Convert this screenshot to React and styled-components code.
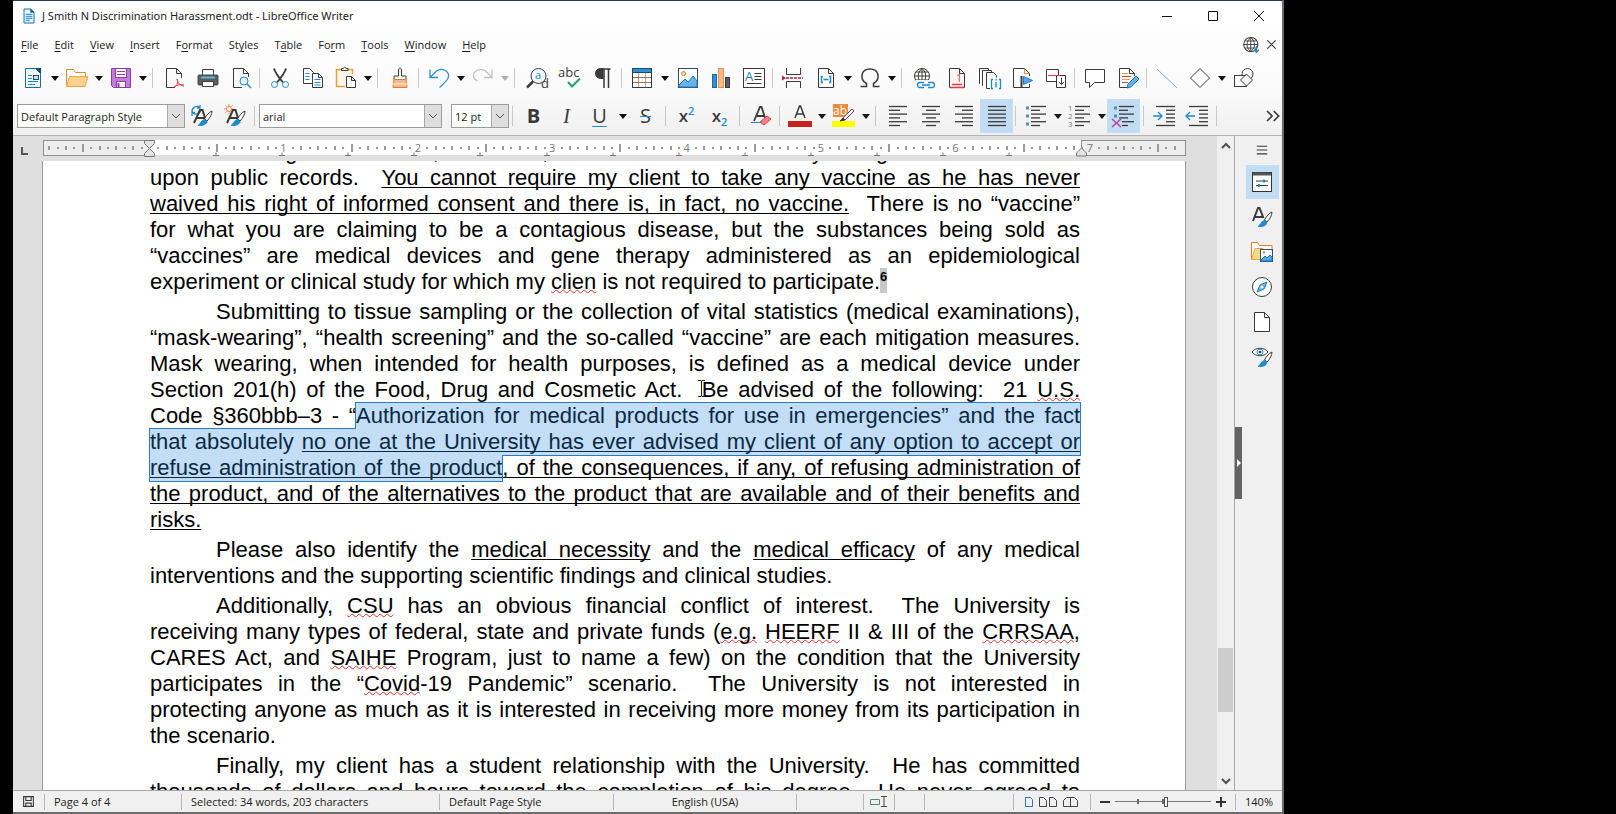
import React, { useState } from "react";
import styled, { createGlobalStyle } from "styled-components";

const INK = "#3a3a38";
const BLUE = "#1e8bcd";

const MENUS = [
  ["", "F", "ile"],
  ["", "E", "dit"],
  ["", "V", "iew"],
  ["", "I", "nsert"],
  ["F", "o", "rmat"],
  ["St", "y", "les"],
  ["T", "a", "ble"],
  ["Fo", "r", "m"],
  ["", "T", "ools"],
  ["", "W", "indow"],
  ["", "H", "elp"],
];

const brush = (
  <>
    <path d="M22 7c-3 1-6 5-7.500 8l2.500 2c3-3 5-7 5-10z" fill="#fff" stroke={INK} />
    <path d="M14.500 15.500l2.500 2c-1 4-5 4-9 4 3-1.500 3-5.500 6.500-6z" fill={BLUE} stroke={BLUE} />
  </>
);
const rows = (xs) =>
  xs.map(([a, b], i) => <path key={i} d={`M${a} ${2.5 + i * 3.8}H${b}`} strokeWidth="1.300" />);

// every drawing sits in a 24 x 24 box
const ICONS = {
  doc: (
    <>
      <path d="M4.500 1.500h10l5 5v16h-15z" fill="#e8f3fb" stroke="#1a6ea8" strokeWidth="1.500" />
      <path d="M14.500 1.500v5h5z" fill="#1a5a8c" stroke="#1a5a8c" />
      <path d="M7 9.500h10M7 12.500h10M7 15.500h10M7 18.500h6" stroke={BLUE} strokeWidth="1.500" />
    </>
  ),
  newDoc: (
    <>
      <path d="M4.500 2.500h10l5 5v14h-15z" fill="#eff7fd" stroke="#1a6ea8" />
      <path d="M14 2l6 6V2z" fill="#1b4a70" stroke="none" />
      <path d="M7 9.500h4M7 12.500h4M7 15.500h10M7 18.500h7" stroke={BLUE} />
      <rect x="12.500" y="9.500" width="5" height="4" fill="#cfe6f7" stroke="#1b4a70" />
    </>
  ),
  open: (
    <>
      <path d="M1.500 20.500v-17h7l2 3h10v4" fill="#fff" stroke="#e08a2e" />
      <path d="M1.500 20.500l3-10h18.500l-3 10z" fill="#fcd28e" stroke="#f0a545" />
    </>
  ),
  save: (
    <>
      <path d="M2.500 2.500h19v19h-17l-2-2z" fill="#c57bd8" stroke="#8e3ba8" />
      <rect x="6.500" y="2.500" width="11" height="9" fill="#fff" stroke="#8e3ba8" />
      <path d="M8 5.500h8M8 8.500h8" stroke="#8e3ba8" />
      <rect x="7.500" y="15.500" width="9" height="6" fill="#fff" stroke="#8e3ba8" />
      <path d="M9.500 17v4" stroke="#8e3ba8" strokeWidth="2" />
    </>
  ),
  pdf: (
    <>
      <path d="M12 21.500H3.500v-19h10l5 5V12" fill="#fafafa" />
      <path d="M13.500 2.500v5h5" fill="none" />
      <path d="M14 13c1 5 4 7 7 7M14 13c2 4-1 7-3 9M11 21c3-2 6-3 10-2" fill="none" stroke="#dd3a4c" />
    </>
  ),
  print: (
    <>
      <path d="M6.500 9V3.500h11V9" fill="#fff" />
      <rect x="2" y="9" width="20" height="10" rx="1" fill="#5c5c5a" stroke="#4a4a48" />
      <path d="M5 11.500h14" stroke="#57b6e8" strokeWidth="2" />
      <path d="M6.500 15.500h11v5h-11z" fill="#fff" />
    </>
  ),
  preview: (
    <>
      <path d="M13 21.500H4.500v-19h10l5 5V11" fill="#fafafa" />
      <path d="M14.500 2.500v5h5" fill="none" />
      <circle cx="15" cy="15" r="4" fill="#e6f2fa" stroke={BLUE} />
      <path d="M18 18l4 4" stroke={BLUE} strokeWidth="1.500" />
    </>
  ),
  cut: (
    <>
      <path d="M6 2.500c1 4 4 8 9 14M18 2.500c-1 4-4 8-9 14" fill="none" strokeWidth="1.800" />
      <circle cx="6.500" cy="18.500" r="3" fill="#fff" stroke={BLUE} />
      <circle cx="17.500" cy="18.500" r="3" fill="#fff" stroke={BLUE} />
    </>
  ),
  copy: (
    <>
      <path d="M2.500 2.500h6l4 4v11h-10z" fill="#fff" />
      <path d="M4.500 7.500h4M4.500 10.500h4M4.500 13.500h4" stroke={BLUE} />
      <path d="M11.500 7.500h6l4 4v10h-10z" fill="#fff" />
      <path d="M17.500 7.500v4h4" fill="none" />
      <path d="M13.500 13.500h6M13.500 16.500h6M13.500 19h6" stroke={BLUE} />
    </>
  ),
  paste: (
    <>
      <path d="M11 20.500H2.500v-17h16V8" fill="#fff7e8" stroke="#e8a03c" strokeWidth="1.500" />
      <path d="M7.500 4.500v-2h2c0-1.500 2.500-1.500 2.500 0h2v2z" fill="#fff" />
      <path d="M12.500 10.500h5l4 4v7h-9z" fill="#fff" />
      <path d="M17.500 10.500v4h4" fill="none" />
    </>
  ),
  clone: (
    <>
      <path d="M10.500 10V4c0-2.500 3-2.500 3 0v6h4.500v3.500H6V10z" fill="#fff" />
      <path d="M6 13.500h12l1 8H5z" fill="#f9b98c" stroke="#e8772e" />
      <path d="M5 18h14" stroke="#fff" />
    </>
  ),
  undo: <path d="M3 3.500v8h8M3.500 11l6-6c5-4 13 0 12 6-.5 3-4 6-9 10.500" fill="none" stroke="#2f8fd0" strokeWidth="1.300" />,
  redo: <path d="M21 3.500v8h-8M20.500 11l-6-6C9.500 1 1.500 5 2.500 11c.5 2 2 3 4 4" fill="none" stroke="#c4c4c4" strokeWidth="1.300" />,
  find: (
    <>
      <circle cx="13.500" cy="10" r="7.500" fill="#f4f9fd" />
      <path d="M8 15.500L2 21.500" strokeWidth="2.500" />
      <text x="10" y="13" fontSize="11" fill={BLUE}>a</text>
      <text x="16" y="22" fontSize="13" fill={INK}>d</text>
    </>
  ),
  spell: (
    <>
      <text x="0" y="11" fontSize="13" fill={INK}>abc</text>
      <path d="M10 16l4 4.500 8-8" fill="none" stroke="#27a06b" strokeWidth="2" />
    </>
  ),
  pilcrow: (
    <>
      <path d="M12 2.500H9.500a5 5 0 000 10H12z" fill={INK} />
      <path d="M13 22V3h4.500V22M12 3h7.500" fill="none" strokeWidth="1.500" />
    </>
  ),
  table: (
    <>
      <rect x="2.500" y="2.500" width="19" height="19" fill="#fff" />
      <path d="M8.500 6v15M15.500 6v15" stroke="#e0965a" />
      <path d="M3 11.500h18M3 16.500h18" stroke="#8a7464" />
      <rect x="2.500" y="2.500" width="19" height="19" fill="none" stroke="#2b3d50" />
      <rect x="2.500" y="2.500" width="19" height="4" fill="#2f8fd0" stroke="#1b4a70" />
    </>
  ),
  image: (
    <>
      <rect x="2.500" y="2.500" width="19" height="19" fill="#fff" stroke="#31516b" />
      <path d="M3 19l6-6 3 3 5-6 4 5v6H3z" fill="#68b4ea" stroke="#1e7ac0" />
      <circle cx="7.500" cy="7.500" r="2" fill="#fce0c0" stroke="#e8772e" />
    </>
  ),
  chart: (
    <>
      <rect x="3.500" y="8.500" width="4" height="13" fill="#2f8fd0" stroke="#1b6aa5" />
      <rect x="9.500" y="2.500" width="5" height="19" fill="#f9b98c" stroke="#e8904e" />
      <rect x="16.500" y="11.500" width="4" height="10" fill="#5c5c5a" />
    </>
  ),
  textbox: (
    <>
      <rect x="1.500" y="2.500" width="21" height="19" fill="#fff" />
      <text x="3" y="15" fontSize="13" fill="#1e7ac0">A</text>
      <path d="M12.500 7.500h7M12.500 10.500h7M12.500 13.500h7M5 17.500h14.500" />
    </>
  ),
  pageBreak: (
    <>
      <path d="M5.500 2v6.500h14V2M5.500 22v-6.500h14V22" fill="none" />
      <path d="M5 12h17" stroke="#b02045" strokeDasharray="3 1" strokeWidth="1.500" />
      <path d="M1 9.500l4 2.500-4 2.500z" fill="#b02045" stroke="none" />
    </>
  ),
  field: (
    <>
      <path d="M4.500 2.500h10l5 5v14h-15z" fill="#fff" />
      <path d="M14.500 2.500v5h5" fill="none" />
      <path d="M9 10.500H7.500v6H9M15 10.500h1.500v6H15M9.500 13.500h5" fill="none" stroke={BLUE} strokeWidth="1.500" />
    </>
  ),
  omega: <path d="M2.500 20.500h6v-3C1 13 3 3 12 3s11 10 3.500 14.500v3h6" fill="none" strokeWidth="1.500" />,
  link: (
    <>
      <circle cx="10" cy="10" r="7.500" fill="#fff" />
      <path d="M2.500 10h15M4 6h12M4 14h12M10 2.500v15M10 2.500c-5 4-5 11 0 15M10 2.500c5 4 5 11 0 15" fill="none" />
      <path d="M4 14h20v9H4z" fill="#fafafa" stroke="none" />
      <path d="M12 16.500H8a2.500 2.500 0 000 5h4M16 16.500h4a2.500 2.500 0 010 5h-4M10 19h8" fill="none" stroke={BLUE} strokeWidth="1.300" />
    </>
  ),
  footnote: (
    <>
      <path d="M4.500 2.500h10l5 5v14h-15z" fill="#fff5f5" />
      <path d="M14.500 2.500v5h5" fill="none" />
      <text x="11" y="16" fontSize="11" fill="#dd3a4c">1</text>
      <path d="M5 21.500h14M7 18.500h10" stroke="#dd3a4c" strokeWidth="1.500" />
    </>
  ),
  index: (
    <>
      <path d="M2 17.500h-.5v-15h9v2M5 19.500h-.5v-15h9v2" fill="none" />
      <path d="M12 22.500H8.500v-16h7l3 3v2" fill="#fff" />
      <path d="M15 13.500h-1.500v9H15M21 13.500h1.500v9H21M18 16v5.500M18 13v1.500" fill="none" stroke={BLUE} strokeWidth="1.300" />
    </>
  ),
  bookmark: (
    <>
      <path d="M18.500 10V7.500l-5-5h-11v19h16V18" fill="#fff" />
      <path d="M13.500 2.500v5h5" fill="none" stroke="#e08a2e" />
      <path d="M10.500 10v12" strokeWidth="2" />
      <path d="M12.500 10.500l9 4-9 4z" fill="#55a8e4" stroke="#1e7ac0" />
    </>
  ),
  crossRef: (
    <>
      <path d="M2.500 3.500h12v12h-12z" fill="#fff" />
      <path d="M12.500 9.500h9v12h-9z" fill="#fff" />
      <path d="M4 9.500h12" stroke="#dd3a4c" />
      <path d="M17.500 11.500v7M15 16l2.500 2.500L20 16" fill="none" />
    </>
  ),
  comment: <path d="M2.500 3.500h19v13h-10l-5 5v-5h-4z" fill="#fff" />,
  track: (
    <>
      <path d="M18.500 10V7.500l-5-5h-10v19h9" fill="#fff" />
      <path d="M13.500 2.500v5h5" fill="none" />
      <path d="M6 7.500h6M6 13.500h8" stroke="#e8a03c" />
      <path d="M6 10.500h9M6 16.500h6" stroke="#dd3a4c" />
      <path d="M11 22l1-4 8-8 3 3-8 8z" fill="#68b4ea" stroke="#1e7ac0" />
    </>
  ),
  line: <path d="M2 3l20 19" stroke="#6fb1d8" />,
  diamond: <path d="M12 2.500l9.500 9.500-9.500 9.500L2.500 12z" fill="#fff" />,
  shapes: (
    <>
      <circle cx="15.500" cy="8" r="5.500" fill="#fff" />
      <rect x="2.500" y="9.500" width="12" height="11" fill="#fff" />
      <path d="M14.500 8l6 6-6 6-6-6z" fill="#f4f4f4" />
    </>
  ),
  styleUpdate: (
    <>
      <path d="M2 8a5 5 0 018-4.500M11 6A5 5 0 013 9M10 1v3H7M2 12V8.500h3" fill="none" stroke={BLUE} strokeWidth="1.300" />
      <path d="M4 19l6-13h2.500l4 13M7 14h8" fill="none" strokeWidth="2" />
      {brush}
    </>
  ),
  styleNew: (
    <>
      <circle cx="6" cy="5" r="2.500" fill="#fff" stroke="#e8772e" />
      <path d="M6 0v1.500M6 8.500V10M1 5h1.500M9.500 5H11M2.500 1.500l1 1M9.500 1.500l-1 1M2.500 8.500l1-1" stroke="#e8772e" />
      <path d="M4 19l6-13h2.500l4 13M7 14h8" fill="none" strokeWidth="2" />
      {brush}
    </>
  ),
  clear: (
    <>
      <path d="M5 17l6-14h1.500l4 12M8 12h7" fill="none" strokeWidth="1.800" />
      <path d="M2 18.500h9" stroke={BLUE} />
      <path d="M11 18l7-6 4 3-7 6z" fill="#f0808c" stroke="#dd3a4c" />
    </>
  ),
  fontColor: (
    <>
      <path d="M7 14l4.500-12h1L17 14M8.500 10h7" fill="none" strokeWidth="1.500" />
      <rect x="0" y="17" width="24" height="6" fill="#c9211e" stroke="none" />
    </>
  ),
  highlight: (
    <>
      <rect x="1" y="0" width="15" height="13" fill="#ee8b3a" stroke="none" />
      <text x="1" y="11" fontSize="12" fill="#fff">ab</text>
      <rect x="0" y="17" width="23" height="6" fill="#ffff00" stroke="none" />
      <path d="M11 14l9-9 2 2-9 9z" fill="#fff" stroke="#6a3d7c" />
      <path d="M8 17l3-3 2 2z" fill={INK} />
    </>
  ),
  alignLeft: rows([[3, 21], [3, 14], [3, 21], [3, 14], [3, 21], [3, 14]]),
  alignCenter: rows([[3, 21], [7, 17], [3, 21], [7, 17], [3, 21], [7, 17]]),
  alignRight: rows([[3, 21], [10, 21], [3, 21], [10, 21], [3, 21], [10, 21]]),
  alignJustify: rows([[3, 21], [3, 21], [3, 21], [3, 21], [3, 21], [3, 21]]),
  bullets: (
    <>
      {rows([[7, 22], [7, 16], [7, 22], [7, 16], [7, 22], [7, 16]])}
      <path d="M2 4h3M2 12h3M2 20h3" stroke="#4d90a8" strokeWidth="3" />
    </>
  ),
  numbers: (
    <>
      {rows([[7, 22], [7, 16], [7, 22], [7, 16], [7, 22], [7, 16]])}
      <text x="0" y="7" fontSize="8" fill="#777">1</text>
      <text x="0" y="15" fontSize="8" fill="#777">2</text>
      <text x="0" y="23" fontSize="8" fill="#777">3</text>
    </>
  ),
  noList: (
    <>
      {rows([[7, 22], [7, 16], [7, 22], [7, 16], [10, 22], [10, 16]])}
      <path d="M2 4h3M2 12h3" stroke="#4d90a8" strokeWidth="3" />
      <path d="M0 15l9 8M9 15l-9 8" stroke="#b8419c" strokeWidth="1.500" />
    </>
  ),
  indent: (
    <>
      {rows([[3, 22], [13, 22], [13, 22], [13, 22], [13, 22], [3, 22]])}
      <path d="M0 12h9M5 8l4 4-4 4" fill="none" stroke={BLUE} strokeWidth="1.300" />
    </>
  ),
  outdent: (
    <>
      {rows([[3, 22], [13, 22], [13, 22], [13, 22], [13, 22], [3, 22]])}
      <path d="M0 12h9M4 8l-4 4 4 4" fill="none" stroke={BLUE} strokeWidth="1.300" />
    </>
  ),
  more: <path d="M6 6l6 6-6 6M14 6l6 6-6 6" fill="none" strokeWidth="2" />,
  globe: (
    <>
      <circle cx="11" cy="12" r="10" fill="#fff" strokeWidth="1.500" />
      <path d="M1 12h20M3 7h16M3 17h16M11 2v20M11 2C4 8 4 16 11 22M11 2c7 6 7 14 0 20" fill="none" strokeWidth="1.300" />
      <path d="M19 14v9M15.500 19.500L19 23l3.500-3.500" fill="none" stroke={BLUE} strokeWidth="2" />
    </>
  ),
  close: <path d="M3 3l18 18M21 3L3 21" strokeWidth="2.500" />,
  burger: <path d="M3 5.500h18M3 12h18M3 18.500h18" strokeWidth="2" />,
  properties: (
    <>
      <rect x="2.500" y="2.500" width="19" height="19" fill="#fff" stroke="#333" />
      <path d="M3 4h18" stroke="#555" strokeWidth="3" />
      <path d="M6 11h12M6 15.500h12" />
      <path d="M13 11h2M8 15.500h2" stroke={BLUE} strokeWidth="3" />
    </>
  ),
  styles: (
    <>
      <path d="M3 16L8 3h1.500l4 10M5 12h8" fill="none" strokeWidth="2" />
      {brush}
    </>
  ),
  gallery: (
    <>
      <path d="M1.500 19.500v-17h6l2 3h12.500v4" fill="#fff" stroke="#e8772e" />
      <path d="M1.500 19.500l3.500-11h8v11z" fill="#f5dc8a" stroke="#e8a545" />
      <rect x="10.500" y="9.500" width="12" height="12" fill="#fff" stroke="#31516b" />
      <path d="M11 20l4-4 2 2 3-3 2 2v4H11z" fill="#55a8e4" stroke="#1e7ac0" />
      <path d="M13 12.500h2" stroke="#e8772e" strokeWidth="2" />
    </>
  ),
  navigator: (
    <>
      <circle cx="12" cy="12" r="9.500" fill="#fff" />
      <path d="M17 7l-3 7-7 3 3-7z" fill="#68b4ea" stroke="#1e7ac0" />
      <circle cx="12" cy="12" r="1.500" fill="#fff" stroke="none" />
    </>
  ),
  page: (
    <>
      <path d="M4.500 2.500h10l5 5v14h-15z" fill="#fff" />
      <path d="M14.500 2.500v5h5" fill="none" />
    </>
  ),
  inspector: (
    <>
      <path d="M2 7c4-5 12-5 16 0-4 5-12 5-16 0z" fill="#fff" />
      <circle cx="10" cy="7" r="3" fill="#fff" stroke={BLUE} />
      <circle cx="10" cy="7" r="1" fill={INK} />
      {brush}
    </>
  ),
  tinySave: (
    <>
      <path d="M3 3h18v18H3z" fill="none" strokeWidth="2" />
      <path d="M7 3v7h10V3M7 21v-6h10v6" fill="none" strokeWidth="2" />
    </>
  ),
};

const Icon = ({ name, size = 24 }) => (
  <Drawing viewBox="0 0 24 24" width={size} height={size} aria-hidden="true">
    {ICONS[name]}
  </Drawing>
);

const Tool = ({ name, label, on }) => (
  <ToolButton type="button" aria-label={label || name} aria-pressed={on} $on={on}>
    <Icon name={name} />
  </ToolButton>
);

const Drop = ({ wide, faded }) => (
  <DropButton type="button" aria-label="More options" $wide={wide} $faded={faded}>
    <svg width="8" height="5" aria-hidden="true">
      <path d="M0 0h8L4 5z" />
    </svg>
  </DropButton>
);

const Combo = ({ label, value, width }) => (
  <ComboBox $width={width}>
    <select aria-label={label} defaultValue={value}>
      <option>{value}</option>
    </select>
    <ComboArrow>
      <svg width="10" height="6" aria-hidden="true">
        <path d="M1 1l4 4 4-4" fill="none" stroke="#555" />
      </svg>
    </ComboArrow>
  </ComboBox>
);

const INCH = 134.4;

const Ruler = () => {
  const ticks = [];
  for (let i = -12; i <= 123; i++) {
    if (i === 0 || (i > 0 && i % 16 === 0)) continue;
    const x = Math.round(107 + (i * INCH) / 16);
    const half = i % 8 === 0;
    const size = half ? 8 : i % 2 === 0 ? 4 : 2;
    if (x < 1138) ticks.push(<path key={i} d={`M${x} ${8 - size / 2}v${size}`} stroke="#9a9a9a" strokeWidth="2" />);
  }
  return (
    <svg width="100%" height="20" aria-hidden="true">
      <rect x="0" y="0" width="1143" height="15" fill="#fff" />
      <rect x="0.500" y="0.500" width="106" height="15" fill="#ededed" stroke="#8f8f8f" />
      <rect x="1038.500" y="0.500" width="104" height="15" fill="#ededed" stroke="#8f8f8f" />
      {ticks}
      {[1, 2, 3, 4, 5, 6, 7].map((n) => (
        <text key={n} x={106 + n * INCH} y="12" textAnchor="middle" fontSize="11" fill="#777">
          {n}
        </text>
      ))}
      {Array.from({ length: 13 }, (_, i) => (
        <path key={i} d={`M${Math.round(170 + i * 66.1)} 15.500h6m-3 0v-3`} fill="none" stroke="#777" />
      ))}
      <path d="M101.500 .5h10v3l-5 5 5 5v3h-10v-3l5-5-5-5z" fill="#e4e4e4" stroke="#777" />
      <path d="M1038.500 8l5 5v3h-10v-3z" fill="#e4e4e4" stroke="#777" />
    </svg>
  );
};

const App = () => {
  const [zoom, setZoom] = useState(53);

  return (
    <>
      <GlobalStyle />
      <Window>
        <TitleBar>
          <Icon name="doc" size={16} />
          <Title>J Smith N Discrimination Harassment.odt - LibreOffice Writer</Title>
          <Caption type="button" aria-label="Minimize">
            <svg width="10" height="10"><path d="M0 5.500h10" /></svg>
          </Caption>
          <Caption type="button" aria-label="Maximize">
            <svg width="10" height="10"><path d="M.5.5h9v9h-9z" /></svg>
          </Caption>
          <Caption type="button" aria-label="Close">
            <svg width="10" height="10"><path d="M0 0l10 10M10 0L0 10" /></svg>
          </Caption>
        </TitleBar>

        <MenuBar>
          {MENUS.map(([a, key, b]) => (
            <MenuButton type="button" key={a + key + b}>
              {a}
              <u>{key}</u>
              {b}
            </MenuButton>
          ))}
          <Spacer />
          <SmallButton type="button" aria-label="Update available"><Icon name="globe" size={17} /></SmallButton>
          <SmallButton type="button" aria-label="Close document"><Icon name="close" size={11} /></SmallButton>
        </MenuBar>

        <ToolBar>
          <Tool name="newDoc" label="New" /><Drop />
          <Tool name="open" /><Drop />
          <Tool name="save" /><Drop />
          <Separator />
          <Tool name="pdf" label="Export as PDF" />
          <Tool name="print" />
          <Tool name="preview" />
          <Separator />
          <Tool name="cut" />
          <Tool name="copy" />
          <Tool name="paste" /><Drop />
          <Separator />
          <Tool name="clone" label="Clone formatting" />
          <Separator />
          <Tool name="undo" /><Drop />
          <Tool name="redo" /><Drop faded />
          <Separator />
          <Tool name="find" />
          <Tool name="spell" label="Spelling" />
          <Tool name="pilcrow" label="Formatting marks" />
          <Separator />
          <Tool name="table" /><Drop wide />
          <Tool name="image" />
          <Tool name="chart" />
          <Tool name="textbox" />
          <Separator />
          <Tool name="pageBreak" label="Page break" />
          <Tool name="field" /><Drop />
          <Tool name="omega" label="Special character" /><Drop />
          <Separator />
          <Tool name="link" label="Hyperlink" />
          <Tool name="footnote" />
          <Tool name="index" />
          <Tool name="bookmark" />
          <Tool name="crossRef" label="Cross-reference" />
          <Separator />
          <Tool name="comment" />
          <Tool name="track" label="Track changes" />
          <Separator />
          <Tool name="line" />
          <Tool name="diamond" label="Basic shapes" /><Drop />
          <Tool name="shapes" label="Draw functions" />
        </ToolBar>

        <ToolBar $format>
          <Combo label="Paragraph style" value="Default Paragraph Style" width={168} />
          <Tool name="styleUpdate" label="Update style" />
          <Tool name="styleNew" label="New style" />
          <Separator $wide />
          <Combo label="Font name" value="arial" width={183} />
          <ComboGap />
          <Combo label="Font size" value="12 pt" width={58} />
          <Separator $wide />
          <ToolButton type="button" aria-label="Bold"><Letter $bold>B</Letter></ToolButton>
          <ToolButton type="button" aria-label="Italic"><Letter $italic>I</Letter></ToolButton>
          <ToolButton type="button" aria-label="Underline"><Letter $line="underline">U</Letter></ToolButton>
          <Drop wide />
          <ToolButton type="button" aria-label="Strikethrough"><Letter $line="line-through">S</Letter></ToolButton>
          <Separator $wide />
          <ToolButton type="button" aria-label="Superscript"><Script>x<sup>2</sup></Script></ToolButton>
          <ToolButton type="button" aria-label="Subscript"><Script>x<sub>2</sub></Script></ToolButton>
          <Separator $wide />
          <Tool name="clear" label="Clear formatting" />
          <Separator />
          <Tool name="fontColor" label="Font color" /><Drop />
          <Tool name="highlight" /><Drop />
          <Separator />
          <Tool name="alignLeft" label="Align left" />
          <Tool name="alignCenter" label="Align center" />
          <Tool name="alignRight" label="Align right" />
          <Tool name="alignJustify" label="Justified" on />
          <Separator />
          <Tool name="bullets" /><Drop />
          <Tool name="numbers" /><Drop />
          <Tool name="noList" label="No list" on />
          <Separator $wide />
          <Tool name="indent" />
          <Tool name="outdent" />
          <Separator />
          <Spacer />
          <SmallButton type="button" aria-label="More"><Icon name="more" size={20} /></SmallButton>
        </ToolBar>

        <Workspace>
          <Editor>
            <RulerRow>
              <TabKind>
                <svg width="8" height="8" aria-hidden="true"><path d="M1 0v7h6" fill="none" stroke="#555" strokeWidth="2" /></svg>
              </TabKind>
              <Ruler />
            </RulerRow>
            <Canvas>
              <Page>
                <Body>
                  <p>
                    laws on being where there, as noted, in the matters to be any rising claims that relate<br />
                    upon public records.&nbsp; <u>You cannot require my client to take any vaccine as he has never<br />
                    waived his right of informed consent and there is, in fact, no vaccine.</u>&nbsp; There is no “vaccine”<br />
                    for what you are claiming to be a contagious disease, but the substances being sold as<br />
                    “vaccines” are medical devices and gene therapy administered as an epidemiological
                    <Last>experiment or clinical study for which my <Typo>clien</Typo> is not required to participate.<Note>6</Note></Last>
                  </p>
                  <p>
                    Submitting to tissue sampling or the collection of vital statistics (medical examinations),<br />
                    “mask-wearing”, “health screening” and the so-called “vaccine” are each mitigation measures.<br />
                    Mask wearing, when intended for health purposes, is defined as a medical device under<br />
                    Section 201(h) of the Food, Drug and Cosmetic Act.&nbsp; <Caret aria-hidden="true"><svg width="7" height="17"><path d="M0 .5h3l.5 1 .5-1h3M3.500 1v15M0 16.500h3l.5-1 .5 1h3" fill="none" stroke="#222" /></svg></Caret>Be advised of the following:&nbsp; 21 <Typo>U.S.</Typo><br />
                    Code §360bbb–3 - “<Selection>Authorization for medical products for use in emergencies” and the fact<br />
                    that absolutely <u>no one at the University has ever advised my client of any option to accept or<br />
                    refuse administration of the product</u></Selection><u>, of the consequences, if any, of refusing administration of<br />
                    the product, and of the alternatives to the product that are available and of their benefits and</u>
                    <Last><u>risks.</u></Last>
                  </p>
                  <p>
                    Please also identify the <u>medical necessity</u> and the <u>medical efficacy</u> of any medical
                    <Last>interventions and the supporting scientific findings and clinical studies.</Last>
                  </p>
                  <p>
                    Additionally, <Typo>CSU</Typo> has an obvious financial conflict of interest.&nbsp; The University is<br />
                    receiving many types of federal, state and private funds (<Typo>e.g.</Typo> <Typo>HEERF</Typo> II &amp; III of the <Typo>CRRSAA</Typo>,<br />
                    CARES Act, and <Typo>SAIHE</Typo> Program, just to name a few) on the condition that the University<br />
                    participates in the “<Typo>Covid</Typo>-19 Pandemic” scenario.&nbsp; The University is not interested in<br />
                    protecting anyone as much as it is interested in receiving more money from its participation in
                    <Last>the scenario.</Last>
                  </p>
                  <p>
                    Finally, my client has a student relationship with the University.&nbsp; He has committed<br />
                    thousands of dollars and hours toward the completion of his degree.&nbsp; He never agreed to
                  </p>
                </Body>
              </Page>
            </Canvas>
          </Editor>
          <ScrollBar>
            <ScrollButton type="button" aria-label="Scroll up">
              <svg width="10" height="7"><path d="M1 6l4-4 4 4" /></svg>
            </ScrollButton>
            <Track><Thumb /></Track>
            <ScrollButton type="button" aria-label="Scroll down">
              <svg width="10" height="7"><path d="M1 1l4 4 4-4" /></svg>
            </ScrollButton>
          </ScrollBar>
          <SideBar>
            <HandleStrip>
              <Handle type="button" aria-label="Hide sidebar">
                <svg width="4" height="8"><path d="M0 0l4 4-4 4z" fill="#fff" /></svg>
              </Handle>
            </HandleStrip>
            <Deck>
              <SideButton type="button" $short aria-label="Sidebar settings"><Icon name="burger" size={14} /></SideButton>
              <SideButton type="button" $on aria-label="Properties"><Icon name="properties" /></SideButton>
              <SideButton type="button" aria-label="Styles"><Icon name="styles" /></SideButton>
              <SideButton type="button" aria-label="Gallery"><Icon name="gallery" /></SideButton>
              <SideButton type="button" aria-label="Navigator"><Icon name="navigator" /></SideButton>
              <SideButton type="button" aria-label="Page"><Icon name="page" /></SideButton>
              <SideButton type="button" aria-label="Style inspector"><Icon name="inspector" /></SideButton>
            </Deck>
          </SideBar>
        </Workspace>

        <StatusBar>
          <Cell $width={32} $center><Icon name="tinySave" size={13} /></Cell>
          <Cell $width={137}>Page 4 of 4</Cell>
          <Cell $width={258}>Selected: 34 words, 203 characters</Cell>
          <Cell $width={174}>Default Page Style</Cell>
          <Cell $width={183} $center>English (USA)</Cell>
          <Cell $grow />
          <Cell $width={31} $center>
            <svg width="18" height="12" aria-hidden="true">
              <path d="M.5 3.500h9v5h-9z" fill="none" stroke="#4d8a78" />
              <path d="M11 .5h6M14 .5v10M11 10.500h6" stroke="#444" />
            </svg>
          </Cell>
          <Cell $width={30} />
          <Cell $width={89} />
          <Cell $width={77} $center>
            <svg width="56" height="12" aria-hidden="true" fill="none" stroke="#444">
              <path d="M1.500 1.500h5l2 2v7h-7z" stroke="#2f70c0" />
              <path d="M15.500 1.500h4l3 3v6h-7zM25.500 1.500h4l3 3v6h-7z" />
              <path d="M39.500 10.500v-6l3-3h4v9zM46.500 1.500h4l3 3v6h-7z" />
            </svg>
          </Cell>
          <Cell $width={145}>
            <ZoomRow>
              <ZoomButton type="button" aria-label="Zoom out"><svg width="10" height="10"><path d="M0 5h10" /></svg></ZoomButton>
              <Slider type="range" aria-label="Zoom" min="0" max="100" value={zoom} onChange={(e) => setZoom(e.target.value)} />
              <ZoomButton type="button" aria-label="Zoom in"><svg width="10" height="10"><path d="M0 5h10M5 0v10" /></svg></ZoomButton>
            </ZoomRow>
          </Cell>
          <Cell $width={46} $center $last>140%</Cell>
        </StatusBar>
      </Window>
    </>
  );
};

export default App;

const GlobalStyle = createGlobalStyle`
  * {
    box-sizing: border-box;
  }
  body {
    margin: 0;
    background: #000;
    font-family: "Open Sans", "Noto Sans", sans-serif;
    font-size: 11px;
    color: #1a1a1a;
  }
  button {
    padding: 0;
    border: none;
    background: none;
    font: inherit;
    color: inherit;
  }
`;

const Window = styled.div`
  display: flex;
  flex-direction: column;
  height: 100vh;
  margin: 0 332px 0 13px;
  border-top: 1px solid #2c3b55;
  border-right: 2px solid #6b6b6b;
  border-bottom: 2px solid #6b6b6b;
  background: #fff;
  overflow: hidden;
`;

const TitleBar = styled.header`
  display: flex;
  flex: none;
  align-items: center;
  height: 29px;
  padding-left: 8px;
`;

const Title = styled.span`
  flex: 1;
  padding-left: 5px;
  font-family: "Noto Sans", "Open Sans", sans-serif;
`;

const Caption = styled.button`
  display: flex;
  align-items: center;
  justify-content: center;
  width: 46px;
  height: 28px;

  path {
    fill: none;
    stroke: #111;
  }
`;

const MenuBar = styled.nav`
  display: flex;
  flex: none;
  align-items: center;
  height: 29px;
  padding: 0 1px 0 8px;
  background: #fdfdfd;
`;

const MenuButton = styled.button`
  margin-right: 16px;

  u {
    text-underline-offset: 2px;
  }
`;

const Spacer = styled.div`
  flex: 1;
`;

const SmallButton = styled.button`
  display: flex;
  align-items: center;
  justify-content: center;
  min-width: 20px;
  height: 24px;
`;

const ToolBar = styled.div`
  display: flex;
  flex: none;
  align-items: center;
  height: ${(props) => (props.$format ? "39px" : "38px")};
  padding: ${(props) => (props.$format ? "0 0 0 4px" : "0 0 0 3px")};
  border-bottom: ${(props) => (props.$format ? "1px solid #b4b4b4" : "none")};
  background: ${(props) => (props.$format ? "linear-gradient(#f9f9f9, #f0f0f0)" : "linear-gradient(#fdfdfd, #f9f9f9)")};
`;

const ToolButton = styled.button`
  display: flex;
  flex: none;
  align-items: center;
  justify-content: center;
  width: 33px;
  height: 34px;
  background: ${(props) => (props.$on ? "#c2dcf3" : "none")};
`;

const Drawing = styled.svg`
  flex: none;
  overflow: visible;
  stroke: ${INK};

  text {
    stroke: none;
  }
`;

const DropButton = styled.button`
  display: flex;
  flex: none;
  align-items: center;
  justify-content: center;
  width: ${(props) => (props.$wide ? "13px" : "11px")};
  height: 34px;
  fill: ${(props) => (props.$faded ? "#b0b0b0" : "#111")};
`;

const Separator = styled.div`
  flex: none;
  width: 1px;
  height: 20px;
  margin: 0 ${(props) => (props.$wide ? "4px" : "3px")} 0 ${(props) => (props.$wide ? "3px" : "2px")};
  background: #c8c8c8;

  ${DropButton} + & {
    margin: 0 5px 0 4px;
  }
`;

const ComboBox = styled.div`
  display: grid;
  flex: none;
  grid-template-columns: 1fr 17px;
  width: ${(props) => props.$width}px;
  height: 24px;
  border: 1px solid #9b9b9b;
  background: #fff;

  select {
    grid-area: 1 / 1 / 2 / 3;
    appearance: none;
    padding: 0 3px;
    border: none;
    background: none;
    font: inherit;
    color: inherit;
  }
`;

const ComboArrow = styled.span`
  display: flex;
  grid-area: 1 / 2 / 2 / 3;
  align-items: center;
  justify-content: center;
  border-left: 1px solid #a8a8a8;
  background: #dedede;
  pointer-events: none;
`;

const ComboGap = styled.div`
  width: 9px;
`;

const Letter = styled.span`
  font-size: 20px;
  line-height: 24px;
  font-family: ${(props) => (props.$italic ? '"Liberation Serif", serif' : "inherit")};
  font-weight: ${(props) => (props.$bold ? 700 : 400)};
  font-style: ${(props) => (props.$italic ? "italic" : "normal")};
  color: ${INK};
  text-decoration: ${(props) => props.$line || "none"} 1px ${BLUE};
  text-underline-offset: 3px;
`;

const Script = styled.span`
  font-size: 17px;
  font-weight: 600;
  line-height: 24px;
  color: ${INK};

  sup,
  sub {
    font-size: 11px;
    line-height: 0;
    color: ${BLUE};
  }
`;

const Workspace = styled.main`
  display: flex;
  flex: 1;
  min-height: 0;
`;

const Editor = styled.div`
  display: flex;
  flex: 1;
  flex-direction: column;
  min-width: 0;
  background: #dfdfdf;
`;

const RulerRow = styled.div`
  display: flex;
  flex: none;
  height: 25px;
  padding-top: 4px;
`;

const TabKind = styled.div`
  flex: none;
  width: 30px;
  padding: 3px 0 0 8px;
`;

const Canvas = styled.div`
  display: flex;
  flex: 1;
  min-height: 0;
  padding: 0 31px 0 29px;
  overflow: hidden;
`;

const Page = styled.article`
  flex: 1;
  min-width: 0;
  padding: 0 105px 0 107px;
  border-left: 1px solid #9a9a9a;
  border-right: 1px solid #9a9a9a;
  background: #fff;
  overflow: hidden;
`;

/* scrolled so that one line is nearly out of view at the top */
const Body = styled.div`
  margin-top: -22px;
  font-family: "Liberation Sans", Arial, sans-serif;
  font-size: 22px;
  line-height: 26px;
  text-align: justify;
  text-align-last: justify;
  color: #000;

  p {
    margin: 0 0 4px;
    text-indent: 66px;
  }
  p:first-child {
    text-indent: 0;
  }
  u {
    text-decoration-thickness: 1px;
    text-underline-offset: 2px;
    text-decoration-skip-ink: none;
  }
`;

const Last = styled.span`
  display: block;
  text-align-last: left;
  text-indent: 0;
`;

const Typo = styled.span`
  text-decoration: underline wavy 1px #e03030;
  text-decoration-skip-ink: none;
  text-underline-offset: 0;
`;

const Note = styled.sup`
  padding: 1px 0 9px;
  background: #c8c8c8;
  font-size: 13px;
  font-weight: 700;
  line-height: 0;
`;

const Selection = styled.mark`
  padding-bottom: 1px;
  outline: 1px solid #2a7ac4;
  background: #c2ddf5;
  color: #0a2a44;
`;

const Caret = styled.span`
  position: absolute;
  margin: 3px 0 0 -4px;
  line-height: 0;
  text-indent: 0;
`;

const ScrollBar = styled.div`
  display: flex;
  flex: none;
  flex-direction: column;
  width: 17px;
  background: #f0f0f0;
`;

const ScrollButton = styled.button`
  display: flex;
  align-items: center;
  justify-content: center;
  height: 18px;

  path {
    fill: none;
    stroke: #505050;
    stroke-width: 2;
  }
`;

const Track = styled.div`
  display: grid;
  flex: 1;
  grid-template-rows: 495fr 64fr 60fr;
  padding: 0 1px;
`;

const Thumb = styled.div`
  grid-row: 2;
  background: #cdcdcd;
`;

const SideBar = styled.aside`
  display: flex;
  flex: none;
  width: 48px;
  border-left: 1px solid #a8a8a8;
  background: #f0f0f0;
`;

const HandleStrip = styled.div`
  display: flex;
  align-items: center;
  width: 7px;
`;

const Handle = styled.button`
  display: flex;
  align-items: center;
  justify-content: center;
  width: 7px;
  height: 72px;
  background: #636363;
`;

const Deck = styled.div`
  display: flex;
  flex: 1;
  flex-direction: column;
  align-items: center;
`;

const SideButton = styled.button`
  display: flex;
  align-items: center;
  justify-content: center;
  width: 33px;
  height: ${(props) => (props.$short ? "28px" : "34px")};
  margin-bottom: 1px;
  background: ${(props) => (props.$on ? "#c2dcf3" : "none")};
`;

const StatusBar = styled.footer`
  display: flex;
  flex: none;
  align-items: center;
  height: 22px;
  border-top: 1px solid #a8a8a8;
  background: #f0f0f0;
`;

const Cell = styled.div`
  display: flex;
  flex: ${(props) => (props.$grow ? "1" : "none")};
  align-items: center;
  justify-content: ${(props) => (props.$center ? "center" : "flex-start")};
  width: ${(props) => (props.$width ? `${props.$width}px` : "auto")};
  height: 16px;
  padding: 0 ${(props) => (props.$center ? "0" : "9px")};
  border-right: ${(props) => (props.$last ? "none" : "1px solid #b8b8b8")};
`;

const ZoomRow = styled.div`
  display: flex;
  flex: 1;
  align-items: center;
  min-width: 0;
`;

const ZoomButton = styled.button`
  display: flex;
  flex: none;

  path {
    stroke: #333;
    stroke-width: 2;
  }
`;

const Slider = styled.input`
  flex: 1;
  min-width: 0;
  height: 12px;
  margin: 0 5px;
  appearance: none;
  background:
    linear-gradient(#666, #666) 22px 50% / 2px 5px no-repeat,
    linear-gradient(#666, #666) 50% 50% / 2px 5px no-repeat,
    linear-gradient(#777, #777) 0 50% / 100% 1px no-repeat;

  &::-webkit-slider-thumb {
    appearance: none;
    width: 4px;
    height: 10px;
    border: 1px solid #555;
    background: #fff;
  }
`;
